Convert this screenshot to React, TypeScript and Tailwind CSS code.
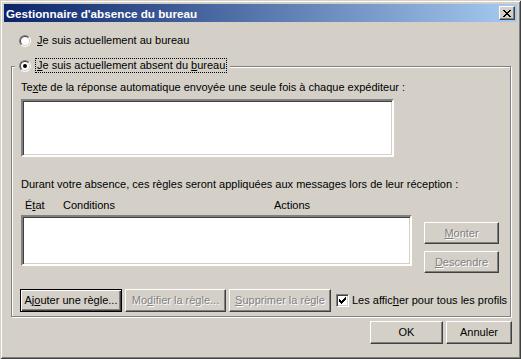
import React from 'react';

const font = "font-['Liberation_Sans',Arial,sans-serif]";

function Radio({ checked }: { checked?: boolean }) {
  return (
    <span className="relative block w-[12px] h-[12px] shrink-0 rounded-full border border-t-[#808080] border-l-[#808080] border-r-white border-b-white">
      <span className="flex items-center justify-center w-[10px] h-[10px] rounded-full bg-white border border-t-[#404040] border-l-[#404040] border-r-[#d4d0c8] border-b-[#d4d0c8]">
        {checked && <span className="block w-[4px] h-[4px] rounded-full bg-black" />}
      </span>
    </span>
  );
}

function CheckBox() {
  const cols = [2, 3, 4, 3, 2, 1, 0];
  return (
    <span className="block w-[13px] h-[13px] shrink-0 bg-white border border-t-[#808080] border-l-[#808080] border-r-white border-b-white shadow-[inset_1px_1px_0_#404040,inset_-1px_-1px_0_#d4d0c8]">
      <svg width="11" height="11" viewBox="0 0 11 11" className="block" shapeRendering="crispEdges">
        {cols.map((y, x) => (
          <rect key={x} x={2 + x} y={2 + y} width="1" height="3" fill="#000" />
        ))}
      </svg>
    </span>
  );
}

function CloseGlyph() {
  const rows: [number, number][][] = [
    [[0, 2], [6, 2]],
    [[1, 2], [5, 2]],
    [[2, 4]],
    [[3, 2]],
    [[2, 4]],
    [[1, 2], [5, 2]],
    [[0, 2], [6, 2]],
  ];
  return (
    <svg width="8" height="7" viewBox="0 0 8 7" shapeRendering="crispEdges">
      {rows.map((segs, y) =>
        segs.map(([x, w], i) => <rect key={`${y}-${i}`} x={x} y={y} width={w} height="1" fill="#000" />)
      )}
    </svg>
  );
}

interface ButtonProps {
  children: React.ReactNode;
  className?: string;
  disabled?: boolean;
  isDefault?: boolean;
}

function Button({ children, className = '', disabled, isDefault }: ButtonProps) {
  const frame = isDefault
    ? 'border border-black shadow-[inset_1px_1px_0_#fff,inset_-1px_-1px_0_#404040,inset_-2px_-2px_0_#808080]'
    : 'border border-t-white border-l-white border-r-[#404040] border-b-[#404040] shadow-[inset_-1px_-1px_0_#808080]';
  const text = disabled ? 'text-[#808080] [text-shadow:1px_1px_0_#fff]' : 'text-black';
  return (
    <div className={`flex items-center justify-center shrink-0 bg-[#d4d0c8] ${frame} ${text} ${className}`}>
      {children}
    </div>
  );
}

export default function App() {
  return (
    <div
      className={`w-[521px] h-[359px] flex flex-col p-[4px] bg-[#d4d0c8] text-[11px] leading-[13px] text-black ${font} shadow-[inset_1px_1px_0_#d4d0c8,inset_-1px_-1px_0_#404040,inset_2px_2px_0_#fff,inset_-2px_-2px_0_#808080]`}
    >
      {/* title bar */}
      <div className="h-[18px] flex items-center justify-between pl-[2px] pr-[2px] bg-[linear-gradient(to_right,#0a246a,#a6caf0)]">
        <span className="font-bold text-white text-[11.7px]">Gestionnaire d'absence du bureau</span>
        <Button className="w-[16px] h-[14px]">
          <CloseGlyph />
        </Button>
      </div>

      <div className="flex flex-col pl-[7px]">
        <div className="mt-[12px] ml-[8px] h-[13px] flex items-center gap-[6px]">
          <Radio />
          <span>
            <span className="underline">J</span>e suis actuellement au bureau
          </span>
        </div>

        {/* group box */}
        <div className="mt-[19px] w-[500px] flex flex-col pl-[9px] pb-[4px] border border-[#808080] shadow-[inset_1px_1px_0_#fff,1px_1px_0_#fff]">
          <div className="-mt-[8px] -ml-[6px] self-start h-[13px] flex items-center gap-[6px] px-[4px] bg-[#d4d0c8]">
            <Radio checked />
            <span className="outline outline-dotted outline-1 outline-black px-[1px] -ml-[1px]">
              <span className="underline">J</span>e suis actuellement absent du <span className="underline">b</span>ureau
            </span>
          </div>

          <div className="mt-[9px]">
            Te<span className="underline">x</span>te de la réponse automatique envoyée une seule fois à chaque expéditeur :
          </div>
          <div className="mt-[5px] w-[373px] h-[58px] bg-white border-2 border-t-[#808080] border-l-[#808080] border-r-white border-b-white shadow-[inset_1px_1px_0_#404040,inset_-1px_-1px_0_#d4d0c8]" />

          <div className="mt-[21px]">
            Durant votre absence, ces règles seront appliquées aux messages lors de leur réception :
          </div>
          <div className="mt-[8px] flex pl-[4px]">
            <span className="w-[38px]">
              É<span className="underline">t</span>at
            </span>
            <span className="w-[211px]">Conditions</span>
            <span>Actions</span>
          </div>

          <div className="mt-[3px] flex items-start gap-[12px]">
            <div className="w-[391px] h-[51px] bg-white border-2 border-t-[#808080] border-l-[#808080] border-r-white border-b-white shadow-[inset_1px_1px_0_#404040,inset_-1px_-1px_0_#d4d0c8]" />
            <div className="mt-[7px] flex flex-col gap-[7px]">
              <Button disabled className="w-[75px] h-[22px]">
                <span>
                  <span className="underline">M</span>onter
                </span>
              </Button>
              <Button disabled className="w-[75px] h-[22px]">
                <span>
                  <span className="underline">D</span>escendre
                </span>
              </Button>
            </div>
          </div>

          <div className="mt-[16px] -ml-[1px] flex items-center">
            <Button isDefault className="w-[102px] h-[23px]">
              <span>
                Aj<span className="underline">o</span>uter une règle...
              </span>
            </Button>
            <Button disabled className="ml-[3px] w-[101px] h-[23px]">
              <span>
                Mo<span className="underline">d</span>ifier la règle...
              </span>
            </Button>
            <Button disabled className="ml-[3px] w-[102px] h-[23px]">
              <span>
                <span className="underline">S</span>upprimer la règle
              </span>
            </Button>
            <div className="ml-[5px] flex items-center gap-[3px]">
              <CheckBox />
              <span>
                Les affic<span className="underline">h</span>er pour tous les profils
              </span>
            </div>
          </div>
        </div>

        <div className="mt-[4px] w-[501px] flex justify-end gap-[3px]">
          <Button className="w-[73px] h-[23px]">OK</Button>
          <Button className="w-[66px] h-[23px]">Annuler</Button>
        </div>
      </div>
    </div>
  );
}
